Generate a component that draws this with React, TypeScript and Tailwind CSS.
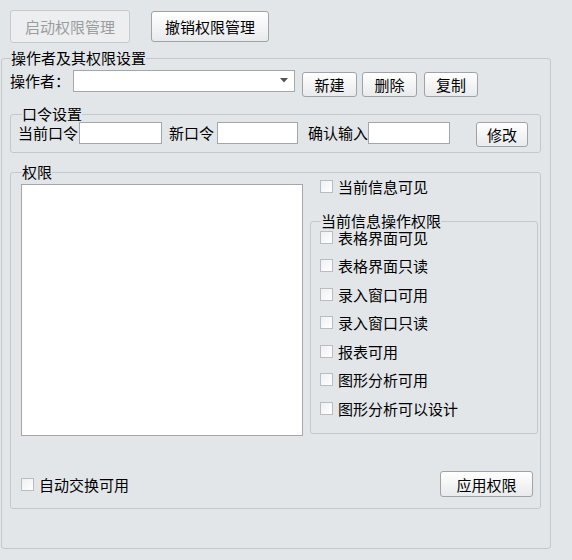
import React from "react";

const Btn = ({
  label,
  className = "",
  disabled = false,
}: {
  label: string;
  className?: string;
  disabled?: boolean;
}) => (
  <button
    disabled={disabled}
    className={
      "flex shrink-0 items-center justify-center rounded-[3px] border leading-none " +
      (disabled
        ? "border-[#c6cacd] bg-[#eceef0] text-[#9a9c9e] "
        : "border-[#9fa3a7] bg-gradient-to-b from-white to-[#e9eaec] text-black ") +
      className
    }
  >
    {label}
  </button>
);

const Check = ({ label, className = "" }: { label: string; className?: string }) => (
  <label className={"flex items-center " + className}>
    <span className="h-[13px] w-[13px] shrink-0 border border-[#b9bdc1] bg-gradient-to-br from-[#eef0f2] to-white" />
    <span className="ml-[5px] leading-none">{label}</span>
  </label>
);

const Field = ({ className = "" }: { className?: string }) => (
  <div className={"h-[22px] shrink-0 border border-[#a3a7ab] bg-white " + className} />
);

export default function App() {
  const rights = [
    "表格界面可见",
    "表格界面只读",
    "录入窗口可用",
    "录入窗口只读",
    "报表可用",
    "图形分析可用",
    "图形分析可以设计",
  ];

  return (
    <div className="h-[560px] w-[572px] overflow-hidden bg-[#e3e6e9] font-['Noto_Sans_CJK_SC',sans-serif] text-[15px] text-black">
      <div className="flex items-start pl-[10px] pt-[10px]">
        <Btn label="启动权限管理" disabled className="h-[33px] w-[120px]" />
        <Btn label="撤销权限管理" className="ml-[21px] mt-[1px] h-[31px] w-[118px]" />
      </div>

      <fieldset className="ml-[1px] mt-[7px] h-[499px] w-[550px] rounded-[3px] border border-[#c4c8cc]">
        <legend className="ml-[9px] h-[16px] leading-[16px]">操作者及其权限设置</legend>

        <div className="mt-[4px] flex items-start">
          <span className="ml-[8px] h-[22px] w-[63px] leading-[22px]">操作者：</span>
          <div className="relative h-[22px] w-[222px] border border-[#a3a7ab] bg-white">
            <svg className="absolute right-[6px] top-[7px]" width="8" height="5" viewBox="0 0 8 5">
              <path d="M0 0 H8 L4 4.5 Z" fill="#555" />
            </svg>
          </div>
          <Btn label="新建" className="ml-[7px] mt-[2px] h-[25px] w-[55px]" />
          <Btn label="删除" className="ml-[5px] mt-[2px] h-[25px] w-[55px]" />
          <Btn label="复制" className="ml-[7px] mt-[2px] h-[25px] w-[54px]" />
        </div>

        <fieldset className="ml-[8px] mt-[9px] h-[47px] w-[531px] rounded-[3px] border border-[#c4c8cc]">
          <legend className="ml-[11px] h-[16px] leading-[16px]">口令设置</legend>
          <div className="flex items-start">
            <span className="ml-[7px] h-[22px] leading-[22px]">当前口令</span>
            <Field className="ml-[1px] w-[83px]" />
            <span className="ml-[7px] h-[22px] leading-[22px]">新口令</span>
            <Field className="ml-[3px] w-[81px]" />
            <span className="ml-[10px] h-[22px] w-[60px] leading-[22px]">确认输入</span>
            <Field className="w-[82px]" />
            <Btn label="修改" className="ml-[26px] h-[25px] w-[52px]" />
          </div>
        </fieldset>

        <fieldset className="ml-[8px] mt-[11px] h-[345px] w-[531px] rounded-[3px] border border-[#c4c8cc]">
          <legend className="ml-[11px] h-[16px] leading-[16px]">权限</legend>
          <div className="flex items-start">
            <div className="ml-[10px] mt-[4px] h-[252px] w-[282px] shrink-0 border border-[#a3a7ab] bg-white" />
            <div className="ml-[7px] flex flex-col">
              <Check label="当前信息可见" className="-mt-[1px] h-[14px] pl-[10px]" />
              <fieldset className="mt-[21px] h-[220px] w-[228px] rounded-[3px] border border-[#c4c8cc]">
                <legend className="ml-[10px] h-[14px] leading-[14px]">当前信息操作权限</legend>
                <div className="-mt-[5px] flex flex-col">
                  {rights.map((r) => (
                    <Check key={r} label={r} className="h-[28.5px] pl-[9px]" />
                  ))}
                </div>
              </fieldset>
            </div>
          </div>
          <div className="mt-[35px] flex h-[26px] items-center justify-between">
            <Check label="自动交换可用" className="ml-[10px]" />
            <Btn label="应用权限" className="mr-[7px] h-[26px] w-[93px]" />
          </div>
        </fieldset>
      </fieldset>
    </div>
  );
}
